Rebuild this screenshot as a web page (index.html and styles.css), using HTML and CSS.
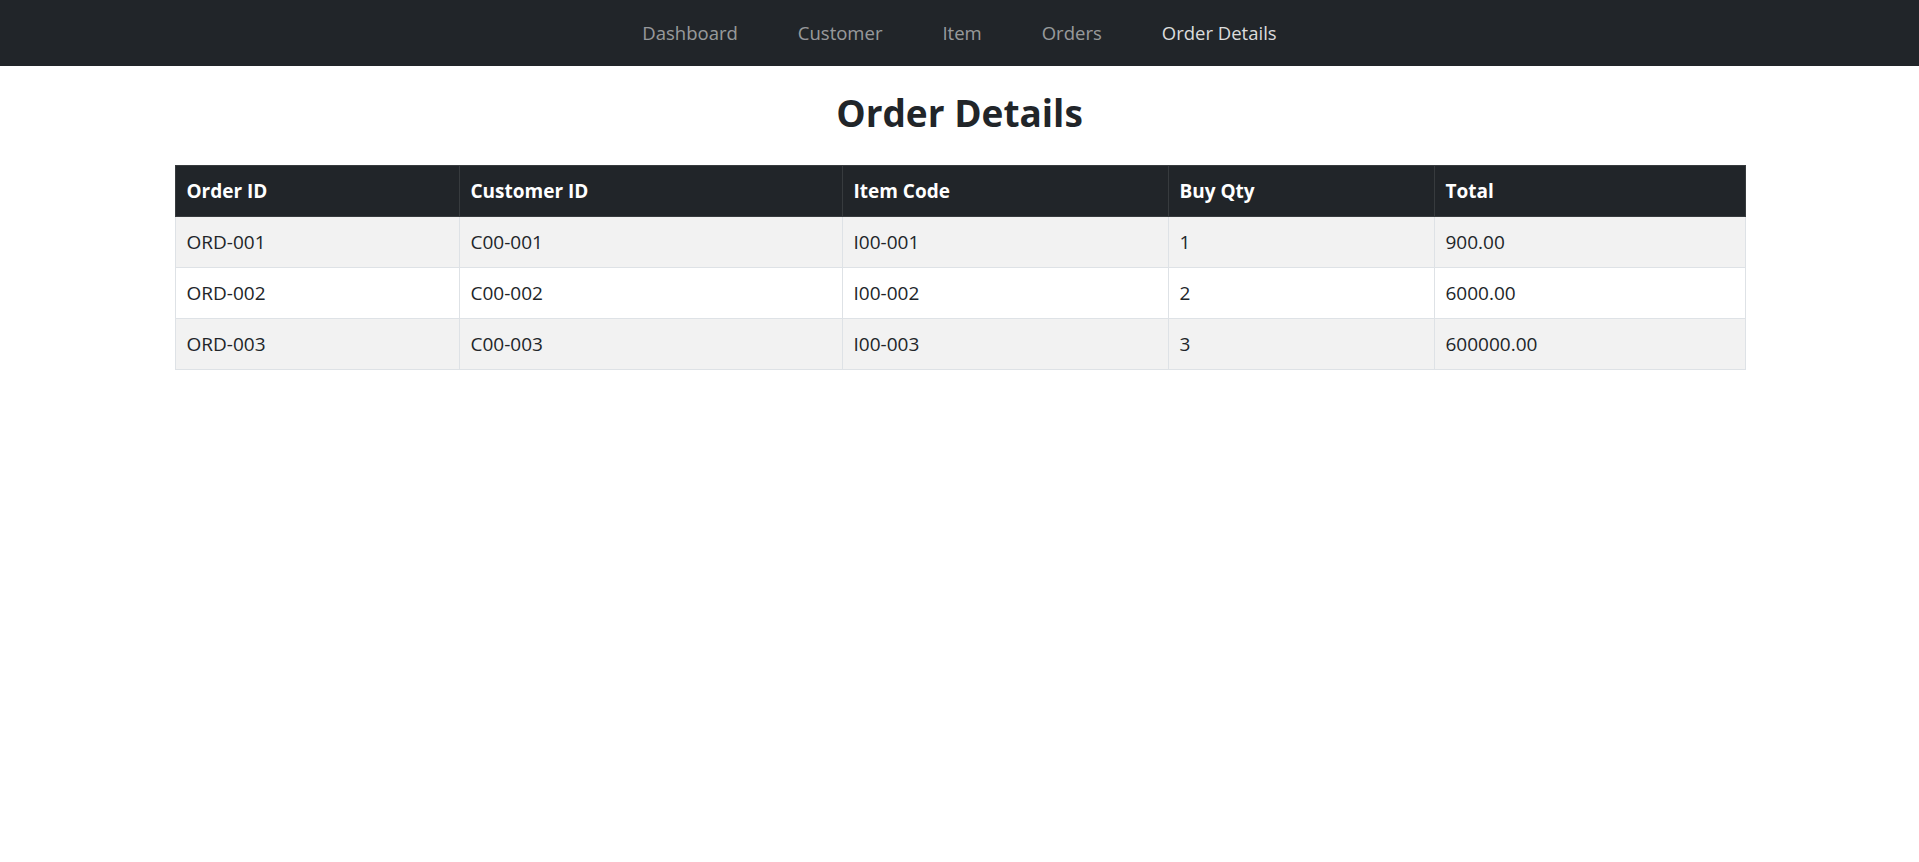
FILE: index.html
```html
<!DOCTYPE html>
<html lang="en">
<head>
<meta charset="utf-8">
<title>Order Details</title>
<link rel="stylesheet" href="styles.css">
</head>
<body>
<nav class="navbar">
  <ul class="nav-list">
    <li><a class="nav-link" href="#">Dashboard</a></li>
    <li><a class="nav-link" href="#">Customer</a></li>
    <li><a class="nav-link" href="#">Item</a></li>
    <li><a class="nav-link" href="#">Orders</a></li>
    <li><a class="nav-link active" href="#">Order Details</a></li>
  </ul>
</nav>
<main class="container">
  <h2 class="page-title">Order Details</h2>
  <table class="data-table">
    <colgroup>
      <col class="c1"><col class="c2"><col class="c3"><col class="c4"><col class="c5">
    </colgroup>
    <thead>
      <tr><th>Order ID</th><th>Customer ID</th><th>Item Code</th><th>Buy Qty</th><th>Total</th></tr>
    </thead>
    <tbody>
      <tr><td>ORD-001</td><td>C00-001</td><td>I00-001</td><td>1</td><td>900.00</td></tr>
      <tr><td>ORD-002</td><td>C00-002</td><td>I00-002</td><td>2</td><td>6000.00</td></tr>
      <tr><td>ORD-003</td><td>C00-003</td><td>I00-003</td><td>3</td><td>600000.00</td></tr>
    </tbody>
  </table>
</main>
</body>
</html>
```
FILE: styles.css
```css
* { box-sizing: border-box; }
html, body { margin: 0; padding: 0; }
body {
  font-family: "Open Sans", "Noto Sans", "Liberation Sans", sans-serif;
  color: #212529;
  background: #fff;
  font-size: 19px;
}
.navbar {
  background: #212529;
  height: 66px;
  display: flex;
  justify-content: center;
  align-items: center;
}
.nav-list {
  list-style: none;
  margin: 0;
  padding: 0;
  display: flex;
  gap: 60px;
}
.nav-link {
  color: rgba(255,255,255,0.55);
  text-decoration: none;
  font-size: 18.5px;
  line-height: 24px;
  display: block;
}
.nav-link.active { color: rgba(255,255,255,0.85); }
.container {
  width: 1570px;
  margin: 0 auto;
}
.page-title {
  text-align: center;
  font-size: 37px;
  font-weight: 700;
  line-height: 44px;
  margin: 25px 0 30px;
}
.data-table {
  width: 100%;
  border-collapse: collapse;
  table-layout: fixed;
}
.c1 { width: 284px; }
.c2 { width: 383px; }
.c3 { width: 326px; }
.c4 { width: 266px; }
.c5 { width: 311px; }
.data-table th, .data-table td {
  text-align: left;
  padding: 12px 11px;
  line-height: 26px;
  border: 1px solid #dee2e6;
}
.data-table th {
  background: #212529;
  color: #fff;
  font-weight: 700;
  border-color: #373b3e;
}
.data-table tbody tr:nth-child(odd) td { background: #f2f2f2; }
```
